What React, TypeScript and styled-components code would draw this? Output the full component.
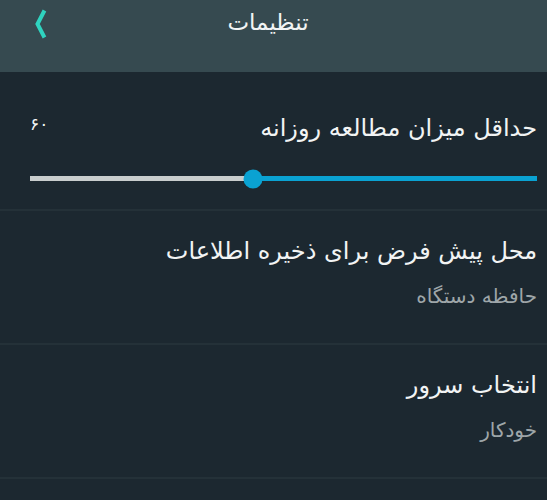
import React from "react"
import { FC } from "react"
import styled, { createGlobalStyle } from "styled-components"

const Color = {
  HEADER: "#364a50",
  BODY: "#1c2830",
  DIVIDER: "#243138",
  TITLE: "#f2f4f4",
  SUB: "#9ea6a9",
  ACCENT: "#2fd3bf",
  TRACK_ON: "#0aa2d2",
  TRACK_OFF: "#c8cdcd",
}

const GlobalStyle = createGlobalStyle`
  html, body {
    margin: 0;
    padding: 0;
    background: ${Color.BODY};
  }
  body {
    font-family: "DejaVu Sans", "Noto Sans", sans-serif;
  }
`

type SliderProps = {
  percent: number
}

const Slider: FC<SliderProps> = ({ percent }) => (
  <Track>
    <TrackOff style={{ width: `${percent}%` }} />
    <TrackOn />
    <Thumb style={{ left: `${percent}%` }} />
  </Track>
)

type ItemProps = {
  title: string
  value: string
}

const OptionItem: FC<ItemProps> = ({ title, value }) => (
  <Section>
    <Title>{title}</Title>
    <SubTitle>{value}</SubTitle>
  </Section>
)

export default function App() {
  return (
    <>
      <GlobalStyle />
      <Page dir="rtl">
        <Header>
          <HeaderTitle>تنظیمات</HeaderTitle>
          <BackButton>
            <svg width="14" height="30" viewBox="0 0 14 30">
              <path d="M11.5 1.5 L4.5 15 L11.5 28.5" fill="none" stroke={Color.ACCENT} strokeWidth="4" strokeLinejoin="miter" />
            </svg>
          </BackButton>
        </Header>
        <SliderSection>
          <SliderHead>
            <Title>حداقل میزان مطالعه روزانه</Title>
            <SliderValue>۶۰</SliderValue>
          </SliderHead>
          <Slider percent={44} />
        </SliderSection>
        <OptionItem title="محل پیش فرض برای ذخیره اطلاعات" value="حافظه دستگاه" />
        <OptionItem title="انتخاب سرور" value="خودکار" />
      </Page>
    </>
  )
}

const Page = styled.div`
  width: 547px;
  min-height: 500px;
  background: ${Color.BODY};
  display: flex;
  flex-direction: column;
`
const Header = styled.header`
  height: 72px;
  background: ${Color.HEADER};
  display: flex;
  align-items: flex-start;
  padding-left: 33px;
  box-sizing: border-box;
`
const HeaderTitle = styled.h1`
  margin: 0;
  flex: 1;
  text-align: center;
  padding-right: 58px;
  font-size: 23px;
  font-weight: normal;
  line-height: 44px;
  color: ${Color.TITLE};
`
const BackButton = styled.button.attrs({ type: "button" })`
  background: none;
  border: none;
  padding: 0;
  margin: 9px 0 0 0;
  width: 14px;
  height: 30px;
  display: flex;
`
const Section = styled.section`
  display: flex;
  flex-direction: column;
  padding: 22px 10px 0 10px;
  height: 134px;
  box-sizing: border-box;
  border-bottom: 2px solid ${Color.DIVIDER};
`
const SliderSection = styled(Section)`
  padding: 38px 10px 0 30px;
  height: 139px;
`
const SliderHead = styled.div`
  display: flex;
  justify-content: space-between;
  align-items: flex-start;
`
const Title = styled.div`
  font-size: 24px;
  line-height: 36px;
  color: ${Color.TITLE};
`
const SubTitle = styled.div`
  font-size: 20px;
  line-height: 36px;
  margin-top: 9px;
  color: ${Color.SUB};
`
const SliderValue = styled.div`
  font-size: 17px;
  line-height: 36px;
  margin-top: -4px;
  color: ${Color.TITLE};
`
const Track = styled.div`
  position: relative;
  display: flex;
  height: 5px;
  margin-top: 30px;
  direction: ltr;
`
const TrackOff = styled.div`
  background: ${Color.TRACK_OFF};
  height: 100%;
`
const TrackOn = styled.div`
  flex: 1;
  background: ${Color.TRACK_ON};
  height: 100%;
`
const Thumb = styled.div`
  position: absolute;
  top: 50%;
  width: 19px;
  height: 19px;
  border-radius: 50%;
  background: ${Color.TRACK_ON};
  transform: translate(-50%, -50%);
`
